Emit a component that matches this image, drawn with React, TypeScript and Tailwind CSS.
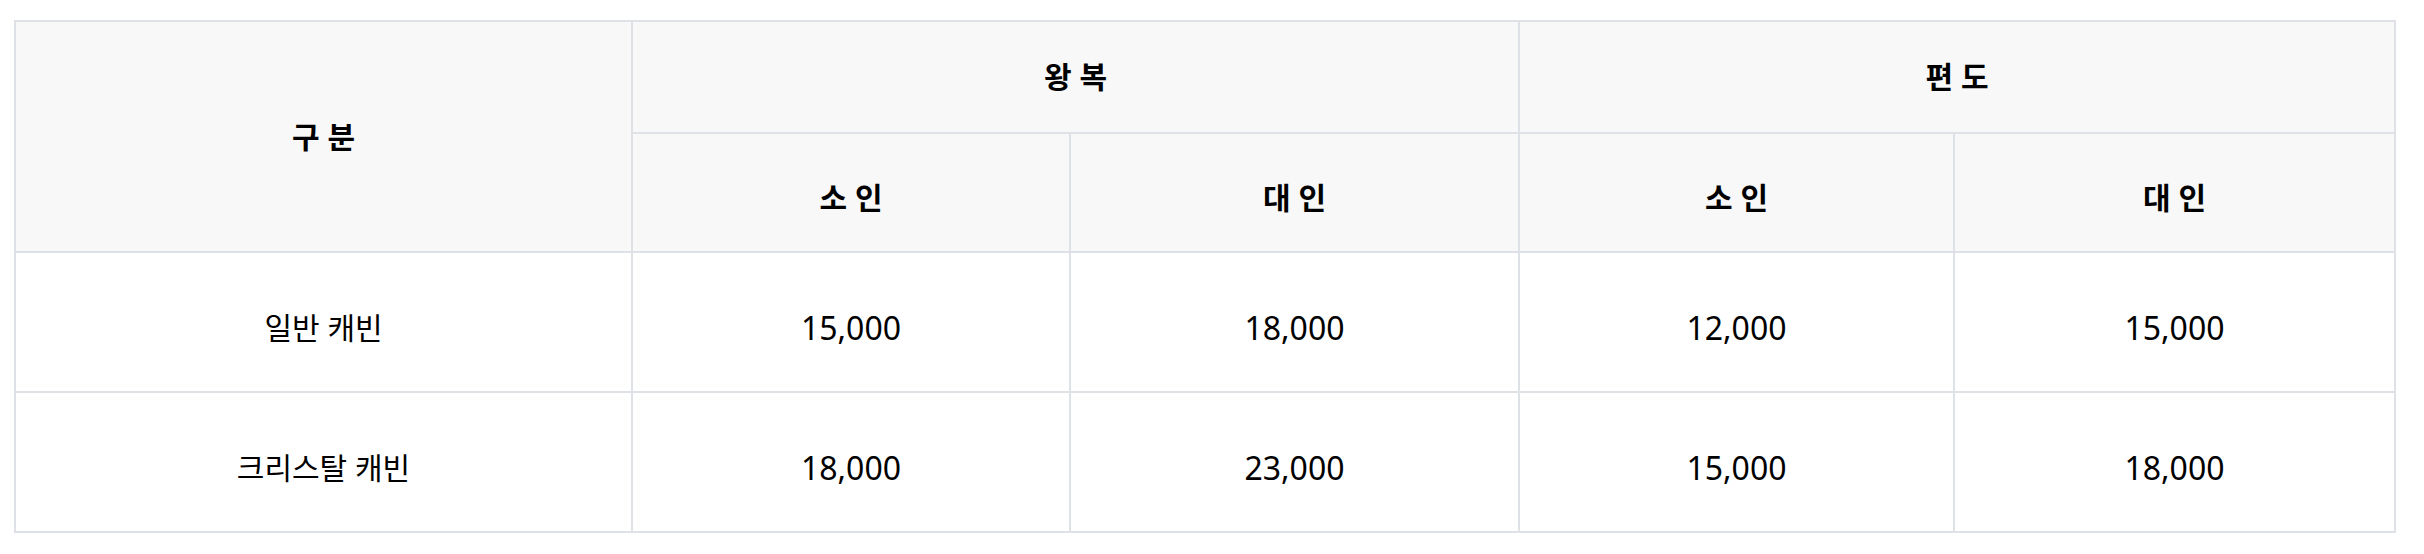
const rows = [
  { name: "일반 캐빈", prices: ["15,000", "18,000", "12,000", "15,000"] },
  { name: "크리스탈 캐빈", prices: ["18,000", "23,000", "15,000", "18,000"] },
];

const th = "border-2 border-[#dee1e5] bg-[#f8f8f8] font-bold text-center align-middle";
const td = "border-2 border-[#dee1e5] bg-white text-center align-middle pt-[12px]";

export default function App() {
  return (
    <div
      className="pl-[14px] pt-[20px] bg-white min-h-[554px] text-black"
      style={{ fontFamily: '"Noto Sans", "Noto Sans CJK KR", sans-serif' }}
    >
      <table className="w-[2380px] table-fixed border-collapse text-[30px] leading-none">
        <colgroup>
          <col className="w-[617px]" />
          <col className="w-[438px]" />
          <col className="w-[449px]" />
          <col className="w-[435px]" />
          <col className="w-[441px]" />
        </colgroup>
        <thead>
          <tr className="h-[112px]">
            <th rowSpan={2} className={th}>
              구 분
            </th>
            <th colSpan={2} className={th}>
              왕 복
            </th>
            <th colSpan={2} className={th}>
              편 도
            </th>
          </tr>
          <tr className="h-[119px]">
            <th className={`${th} pt-[10px]`}>소 인</th>
            <th className={`${th} pt-[10px]`}>대 인</th>
            <th className={`${th} pt-[10px]`}>소 인</th>
            <th className={`${th} pt-[10px]`}>대 인</th>
          </tr>
        </thead>
        <tbody>
          {rows.map((r) => (
            <tr key={r.name} className="h-[140px]">
              <td className={td}>{r.name}</td>
              {r.prices.map((p, i) => (
                <td key={i} className={`${td} text-[32px]`}>
                  {p}
                </td>
              ))}
            </tr>
          ))}
        </tbody>
      </table>
    </div>
  );
}
